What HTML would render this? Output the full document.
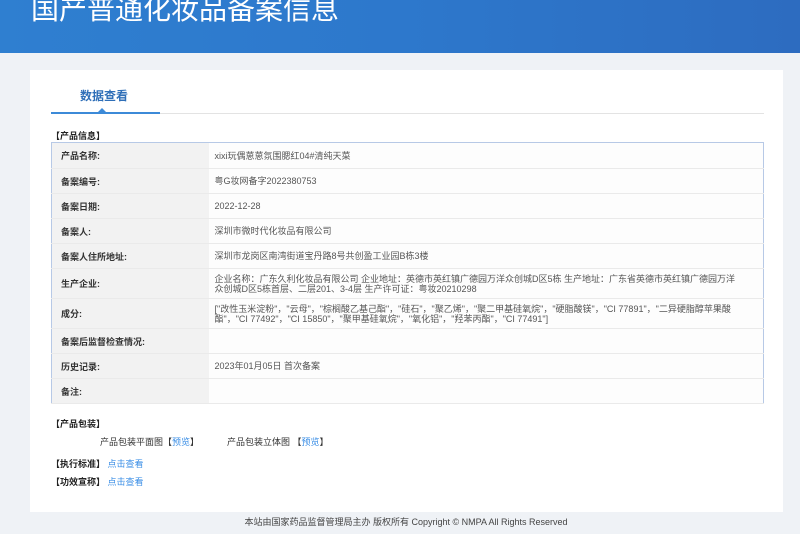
<!DOCTYPE html>
<html><head><meta charset="utf-8"><style>
*{margin:0;padding:0;box-sizing:border-box}
body{width:800px;height:534px;overflow:hidden;background:#eff2f6;font-family:"Liberation Sans","Noto Sans CJK SC",sans-serif;position:relative;color:#333}
.hd{position:absolute;left:0;top:0;width:800px;height:53px;background:linear-gradient(90deg,#2f7fd0,#2d78cc 50%,#2d6cc0);}
.hd h1{position:absolute;left:31px;top:-12px;font-size:28px;font-weight:normal;color:#fff;white-space:nowrap}
.card{position:absolute;left:30px;top:70px;width:753px;height:442px;background:#fff}
.tab{position:absolute;left:50px;top:17px;font-size:12px;font-weight:bold;color:#2f6fb8}
.line{position:absolute;left:21px;top:43px;width:713px;height:1px;background:#e3e3e3}
.line2{position:absolute;left:21px;top:42px;width:109px;height:2px;background:#3c8ad8}
.tri{position:absolute;left:68px;top:38px;width:0;height:0;border-left:4px solid transparent;border-right:4px solid transparent;border-bottom:4px solid #3c8ad8}
.sec{position:absolute;font-size:9px;font-weight:bold;color:#222}
table{position:absolute;left:21px;top:72px;width:713px;border-collapse:collapse;border:1px solid #b7c9e6;font-size:9px}
td{border-bottom:1px solid #eaeaea;padding:0 0 0 8px;vertical-align:middle}
td.l{width:157px;background:#f2f2f2;font-weight:bold;color:#333;padding-left:9px}
td.v{background:#fdfdfd;color:#555;padding-left:6px;padding-right:28px;line-height:10px}
.a{color:#3a8ee6}
.t{position:absolute;font-size:9px;color:#333}
.ft{position:absolute;left:0;top:515px;width:800px;text-align:center;font-size:9px;color:#444;padding-left:12px}
</style></head><body>
<div class="hd"><h1>国产普通化妆品备案信息</h1></div>
<div class="card">
<div class="tab">数据查看</div>
<div class="line"></div><div class="line2"></div><div class="tri"></div>
<div class="sec" style="left:21px;top:59px">【产品信息】</div>
<table>
<tr style="height:26px"><td class="l">产品名称:</td><td class="v">xixi玩偶葸葸氛围腮红04#清纯天菜</td></tr>
<tr style="height:25px"><td class="l">备案编号:</td><td class="v">粤G妆网备字2022380753</td></tr>
<tr style="height:25px"><td class="l">备案日期:</td><td class="v">2022-12-28</td></tr>
<tr style="height:25px"><td class="l">备案人:</td><td class="v">深圳市微时代化妆品有限公司</td></tr>
<tr style="height:25px"><td class="l">备案人住所地址:</td><td class="v">深圳市龙岗区南湾街道宝丹路8号共创盈工业园B栋3楼</td></tr>
<tr style="height:30px"><td class="l">生产企业:</td><td class="v">企业名称：广东久利化妆品有限公司 企业地址：英德市英红镇广德园万洋众创城D区5栋 生产地址：广东省英德市英红镇广德园万洋众创城D区5栋首层、二层201、3-4层 生产许可证：粤妆20210298</td></tr>
<tr style="height:30px"><td class="l">成分:</td><td class="v">["改性玉米淀粉"，"云母"，"棕榈酸乙基己酯"，"硅石"，"聚乙烯"，"聚二甲基硅氧烷"，"硬脂酸镁"，"CI 77891"，"二异硬脂醇苹果酸酯"，"CI 77492"，"CI 15850"，"聚甲基硅氧烷"，"氧化铝"，"羟苯丙酯"，"CI 77491"]</td></tr>
<tr style="height:25px"><td class="l">备案后监督检查情况:</td><td class="v"></td></tr>
<tr style="height:25px"><td class="l">历史记录:</td><td class="v">2023年01月05日 首次备案</td></tr>
<tr style="height:25px"><td class="l">备注:</td><td class="v"></td></tr>
</table>
<div class="sec" style="left:21px;top:347px">【产品包装】</div>
<div class="t" style="left:70px;top:365px">产品包装平面图【<span class="a">预览</span>】</div>
<div class="t" style="left:197px;top:365px">产品包装立体图 【<span class="a">预览</span>】</div>
<div class="sec" style="left:21px;top:387px">【执行标准】 <span class="a" style="font-weight:normal">点击查看</span></div>
<div class="sec" style="left:21px;top:405px">【功效宣称】 <span class="a" style="font-weight:normal">点击查看</span></div>
</div>
<div class="ft">本站由国家药品监督管理局主办 版权所有 Copyright © NMPA All Rights Reserved</div>
</body></html>
